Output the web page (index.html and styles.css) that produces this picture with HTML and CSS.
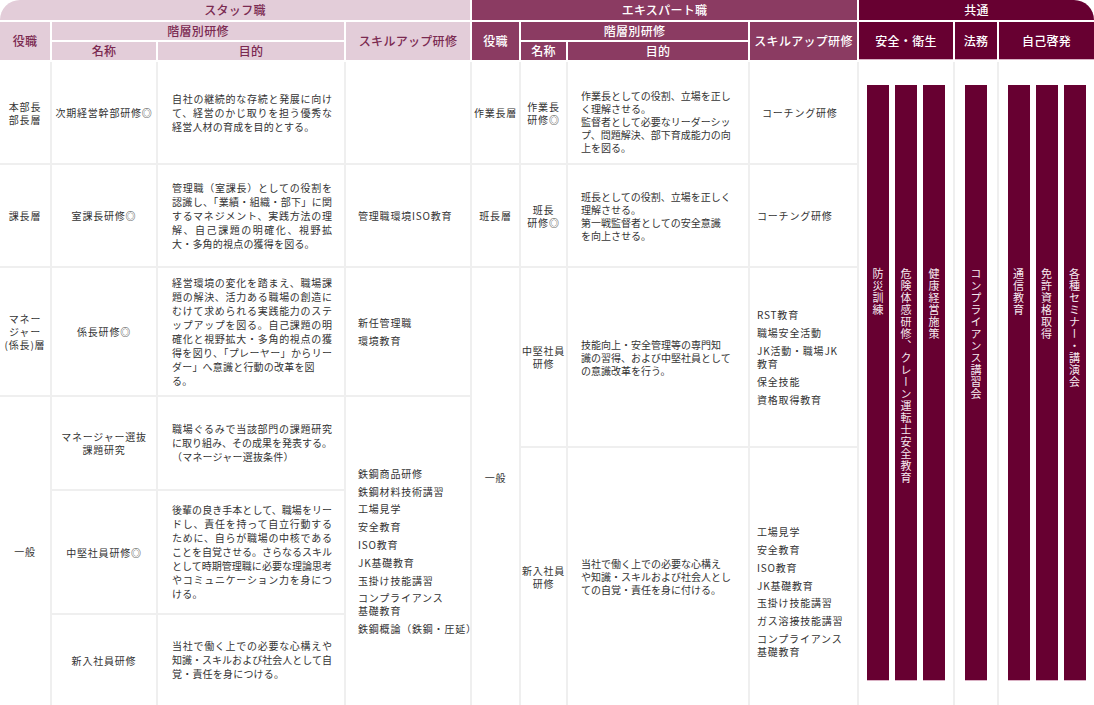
FILE: index.html
```html
<!DOCTYPE html>
<html lang="ja">
<head>
<meta charset="utf-8">
<title>研修体系</title>
<link rel="stylesheet" href="styles.css">
</head>
<body>
<div class="chart">
  <section class="sec staff">
    <div class="h top-left span4">スタッフ職</div>
    <div class="h rs2">役職</div>
    <div class="h span2">階層別研修</div>
    <div class="h rs2">スキルアップ研修</div>
    <div class="h">名称</div>
    <div class="h">目的</div>

    <div class="c"><p>本部長<br>部長層</p></div>
    <div class="c"><p>次期経営幹部研修◎</p></div>
    <div class="c p"><div class="tx">
      <span class="ln j">自社の継続的な存続と発展に向け</span>
      <span class="ln j">て、経営のかじ取りを担う優秀な</span>
      <span class="ln">経営人材の育成を目的とする。</span>
    </div></div>
    <div class="c s"></div>

    <div class="c"><p>課長層</p></div>
    <div class="c"><p>室課長研修◎</p></div>
    <div class="c p"><div class="tx">
      <span class="ln j">管理職（室課長）としての役割を</span>
      <span class="ln j">認識し、「業績・組織・部下」に関</span>
      <span class="ln j">するマネジメント、実践方法の理</span>
      <span class="ln j">解、自己課題の明確化、視野拡</span>
      <span class="ln">大・多角的視点の獲得を図る。</span>
    </div></div>
    <div class="c s"><p>管理職環境ISO教育</p></div>

    <div class="c"><p>マネー<br>ジャー<br>(係長)層</p></div>
    <div class="c"><p>係長研修◎</p></div>
    <div class="c p"><div class="tx">
      <span class="ln j">経営環境の変化を踏まえ、職場課</span>
      <span class="ln j">題の解決、活力ある職場の創造に</span>
      <span class="ln j">むけて求められる実践能力のステ</span>
      <span class="ln j">ップアップを図る。自己課題の明</span>
      <span class="ln j">確化と視野拡大・多角的視点の獲</span>
      <span class="ln j">得を図り、「プレーヤー」からリー</span>
      <span class="ln">ダー」へ意識と行動の改革を図</span>
      <span class="ln">る。</span>
    </div></div>
    <div class="c s">
      <ul class="list">
        <li>新任管理職</li>
        <li>環境教育</li>
      </ul>
    </div>

    <div class="c rs3"><p>一般</p></div>
    <div class="c"><p>マネージャー選抜<br>課題研究</p></div>
    <div class="c p"><div class="tx">
      <span class="ln j">職場ぐるみで当該部門の課題研究</span>
      <span class="ln j">に取り組み、その成果を発表する。</span>
      <span class="ln">（マネージャー選抜条件）</span>
    </div></div>
    <div class="c s rs3">
      <ul class="list">
        <li>鉄鋼商品研修</li>
        <li>鉄鋼材料技術講習</li>
        <li>工場見学</li>
        <li>安全教育</li>
        <li>ISO教育</li>
        <li>JK基礎教育</li>
        <li>玉掛け技能講習</li>
        <li>コンプライアンス<br>基礎教育</li>
        <li>鉄鋼概論（鉄鋼・圧延）</li>
      </ul>
    </div>

    <div class="c"><p>中堅社員研修◎</p></div>
    <div class="c p"><div class="tx">
      <span class="ln j">後輩の良き手本として、職場をリー</span>
      <span class="ln j">ドし、責任を持って自立行動する</span>
      <span class="ln j">ために、自らが職場の中核である</span>
      <span class="ln j">ことを自覚させる。さらなるスキル</span>
      <span class="ln j">として時期管理職に必要な理論思考</span>
      <span class="ln j">やコミュニケーション力を身につ</span>
      <span class="ln">ける。</span>
    </div></div>

    <div class="c"><p>新入社員研修</p></div>
    <div class="c p"><div class="tx">
      <span class="ln j">当社で働く上での必要な心構えや</span>
      <span class="ln j">知識・スキルおよび社会人として自</span>
      <span class="ln">覚・責任を身につける。</span>
    </div></div>
  </section>

  <section class="sec expert">
    <div class="h span4">エキスパート職</div>
    <div class="h rs2">役職</div>
    <div class="h span2">階層別研修</div>
    <div class="h rs2">スキルアップ研修</div>
    <div class="h">名称</div>
    <div class="h">目的</div>

    <div class="c"><p>作業長層</p></div>
    <div class="c"><p>作業長<br>研修◎</p></div>
    <div class="c p ep low"><div class="tx">
      <span class="ln">作業長としての役割、立場を正し</span>
      <span class="ln">く理解させる。</span>
      <span class="ln">監督者として必要なリーダーシッ</span>
      <span class="ln">プ、問題解決、部下育成能力の向</span>
      <span class="ln">上を図る。</span>
    </div></div>
    <div class="c s indent"><p>コーチング研修</p></div>

    <div class="c"><p>班長層</p></div>
    <div class="c"><p>班長<br>研修◎</p></div>
    <div class="c p ep"><div class="tx">
      <span class="ln">班長としての役割、立場を正しく</span>
      <span class="ln">理解させる。</span>
      <span class="ln">第一戦監督者としての安全意識</span>
      <span class="ln">を向上させる。</span>
    </div></div>
    <div class="c s"><p>コーチング研修</p></div>

    <div class="c rs2 raise"><p>一般</p></div>
    <div class="c"><p>中堅社員<br>研修</p></div>
    <div class="c p ep"><div class="tx">
      <span class="ln">技能向上・安全管理等の専門知</span>
      <span class="ln">識の習得、および中堅社員として</span>
      <span class="ln">の意識改革を行う。</span>
    </div></div>
    <div class="c s">
      <ul class="list">
        <li>RST教育</li>
        <li>職場安全活動</li>
        <li>JK活動・職場JK<br>教育</li>
        <li>保全技能</li>
        <li>資格取得教育</li>
      </ul>
    </div>

    <div class="c"><p>新入社員<br>研修</p></div>
    <div class="c p ep"><div class="tx">
      <span class="ln">当社で働く上での必要な心構え</span>
      <span class="ln">や知識・スキルおよび社会人とし</span>
      <span class="ln">ての自覚・責任を身に付ける。</span>
    </div></div>
    <div class="c s sink">
      <ul class="list">
        <li>工場見学</li>
        <li>安全教育</li>
        <li>ISO教育</li>
        <li>JK基礎教育</li>
        <li>玉掛け技能講習</li>
        <li>ガス溶接技能講習</li>
        <li>コンプライアンス<br>基礎教育</li>
      </ul>
    </div>
  </section>

  <section class="sec common">
    <div class="h top-right span3">共通</div>
    <div class="h sub">安全・衛生</div>
    <div class="h sub">法務</div>
    <div class="h sub">自己啓発</div>

    <div class="c bars">
      <div class="bar">防災訓練</div>
      <div class="bar">危険体感研修、クレーン運転士安全教育</div>
      <div class="bar">健康経営施策</div>
    </div>
    <div class="c bars">
      <div class="bar">コンプライアンス講習会</div>
    </div>
    <div class="c bars">
      <div class="bar">通信教育</div>
      <div class="bar">免許資格取得</div>
      <div class="bar">各種セミナー・講演会</div>
    </div>
  </section>
</div>
</body>
</html>
```

FILE: styles.css
```css
html, body {
  margin: 0;
  padding: 0;
  background: #fff;
}

body {
  width: 1094px;
  height: 705px;
  overflow: hidden;
  font-family: "Noto Sans CJK JP", "Noto Sans", sans-serif;
  color: #333;
}

.chart {
  display: flex;
  gap: 2px;
  width: 1094px;
  height: 705px;
  background: linear-gradient(#fff 0 62px, #efefef 62px 100%);
}

.sec {
  flex: none;
  display: grid;
  gap: 2px;
}

.staff {
  width: 470px;
  grid-template-columns: 50px 104px 186px 124px;
  grid-template-rows: 20px 18px 18px 101px 101px 127px 92px 122px 90px;
}

.expert {
  width: 385px;
  grid-template-columns: 47px 45px 180px 107px;
  grid-template-rows: 20px 18px 18px 101px 101px 178px 257px;
}

.common {
  width: 235px;
  grid-template-columns: 94px 42px 95px;
  grid-template-rows: 20px 38px 643px;
}

.span4 { grid-column: span 4; }
.span3 { grid-column: span 3; }
.span2 { grid-column: span 2; }
.rs2 { grid-row: span 2; }
.rs3 { grid-row: span 3; }

/* header cells */
.h {
  display: flex;
  align-items: center;
  justify-content: center;
  font-size: 12px;
  font-weight: 500;
  letter-spacing: 0.3px;
  line-height: 1;
  white-space: nowrap;
}

.staff .h {
  background: #e3cdd9;
  color: #7b2a51;
}

.expert .h {
  background: #8b3b62;
  color: #fff;
}

.common .h {
  background: #670031;
  color: #fff;
}

.common .h.sub {
  box-sizing: border-box;
  border-bottom: 1px solid #d9b3c5;
}

.top-left { border-top-left-radius: 20px; }
.top-right { border-top-right-radius: 20px; }

/* body cells */
.c {
  background: #fff;
  display: flex;
  align-items: center;
  justify-content: center;
  text-align: center;
  font-size: 10px;
  line-height: 13px;
  letter-spacing: 0.8px;
  box-sizing: border-box;
  min-width: 0;
}

.c p {
  margin: 0;
  white-space: nowrap;
}

.c.raise { padding-bottom: 18px; }

/* purpose text */
.p {
  justify-content: flex-start;
  text-align: left;
  padding: 0 12px 0 14px;
  line-height: 14px;
  letter-spacing: 0.2px;
}

.p .tx {
  flex: 1;
  min-width: 0;
}

.ln {
  display: block;
  white-space: nowrap;
}

.ln.j {
  text-align: justify;
  text-align-last: justify;
  letter-spacing: 0;
}

.ep {
  padding: 0 8px 0 13px;
  line-height: 13px;
  letter-spacing: 0;
}

.ep.low { padding-top: 18px; }

/* skill-up cells */
.s {
  justify-content: flex-start;
  text-align: left;
  padding-left: 12px;
}

.expert .s { padding-left: 7px; }
.expert .s.indent { padding-left: 12px; }
.expert .s.sink { padding-top: 30px; }

.list {
  list-style: none;
  margin: 0;
  padding: 0;
  display: flex;
  flex-direction: column;
  gap: 4.8px;
  white-space: nowrap;
  line-height: 13px;
}

/* common vertical bars */
.bars {
  align-items: flex-start;
  padding-top: 23px;
  gap: 6px;
}

.bar {
  flex: none;
  width: 22px;
  height: 596px;
  box-sizing: border-box;
  padding-top: 183px;
  background: #670031;
  border-bottom: 1px solid #d9b0c3;
  color: #f6eaf0;
  writing-mode: vertical-rl;
  font-size: 11px;
  line-height: 22px;
  letter-spacing: 1px;
  white-space: nowrap;
  text-align: start;
}
```
